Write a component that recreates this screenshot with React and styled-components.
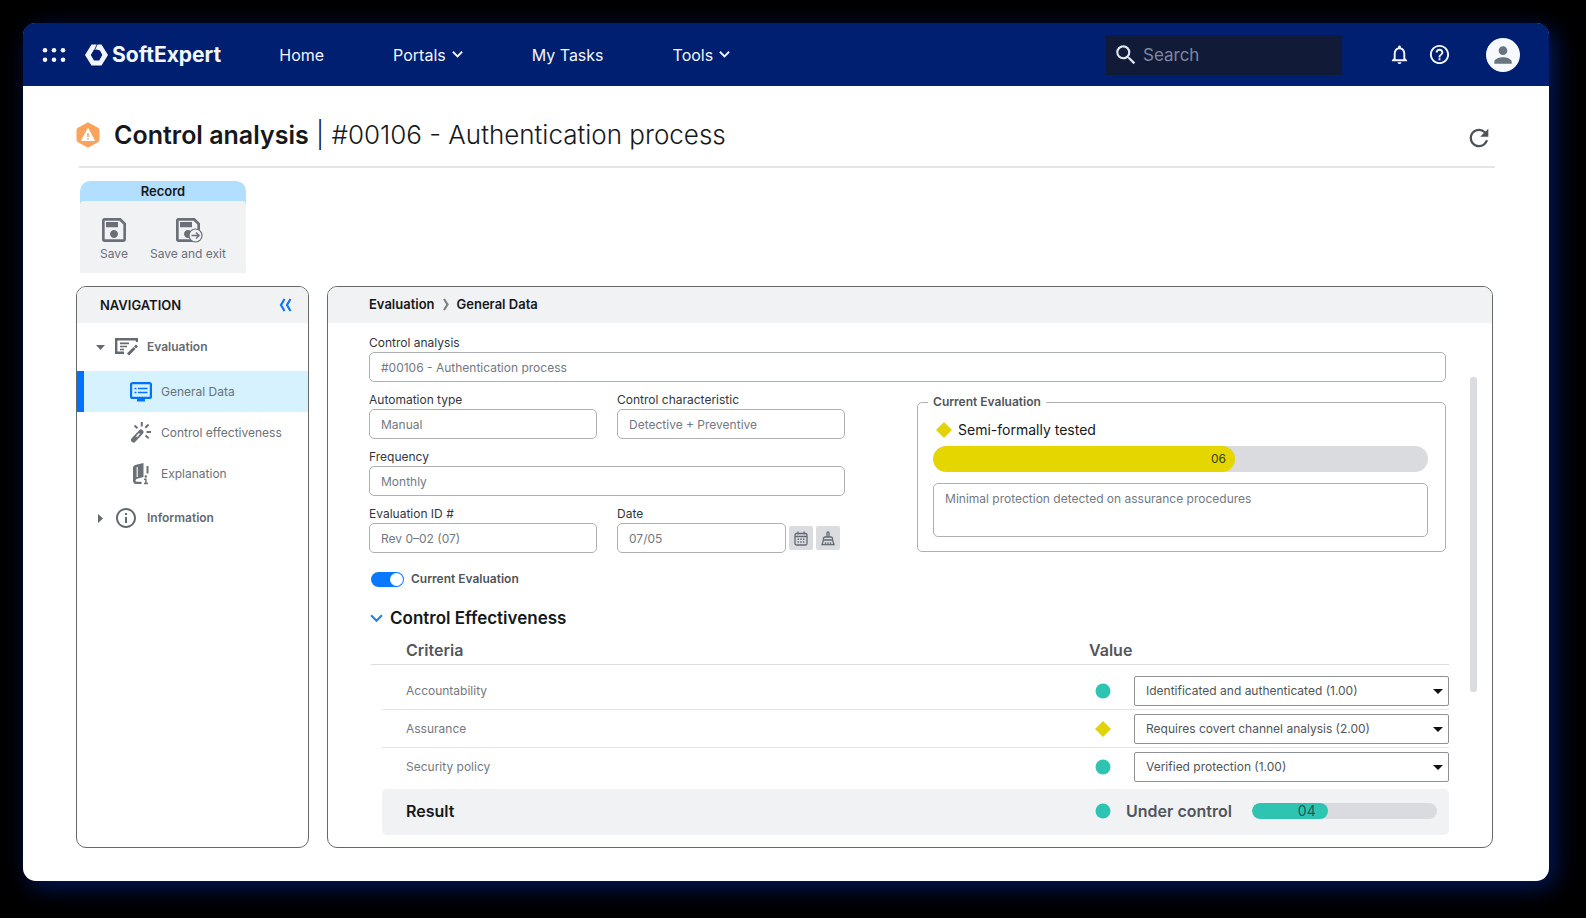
import React, {useState} from 'react';
import styled, {createGlobalStyle} from 'styled-components';
import {
    MdHelpOutline,
    MdInfoOutline,
    MdNotificationsNone,
    MdOutlineSave,
    MdPerson,
    MdRefresh,
    MdSearch
} from 'react-icons/md';

const GlobalStyle = createGlobalStyle`
    * {
        box-sizing: border-box;
    }

    body {
        margin: 0;
        background: #000000;
        color: #16181b;
        font-family: Inter, "Liberation Sans", sans-serif;
        font-size: 12px;
        line-height: 18px;
    }

    button, input, select, textarea {
        margin: 0;
        font: inherit;
        color: inherit;
    }

    button {
        padding: 0;
        border: 0;
        background: none;
        cursor: pointer;
    }

    svg {
        display: block;
        flex: none;
    }
`;

const Window = styled.div`
    margin: 23px 37px 37px 23px;
    background: #ffffff;
    border-radius: 13px;
    box-shadow: 6px 6px 24px #00185e;
`;

const TopBar = styled.header`
    display: flex;
    align-items: center;
    height: 63px;
    padding: 0 29px 0 19px;
    border-radius: 12px 12px 0 0;
    background: #001f70;
    color: #f2f7ff;
`;

const IconButton = styled.button`
    display: flex;
    align-items: center;
    justify-content: center;
    color: ${props => props.$color || 'inherit'};
`;

const Brand = styled.a`
    display: flex;
    align-items: center;
    gap: 4px;
    margin-left: 19px;
    color: inherit;
    font-size: 21px;
    font-weight: 700;
    line-height: 24px;
    text-decoration: none;
`;

const TopNav = styled.nav`
    display: flex;
    gap: 69px;
    margin-left: 58px;
`;

const TopLink = styled.a`
    display: flex;
    align-items: center;
    gap: 6px;
    color: inherit;
    font-size: 16px;
    line-height: 24px;
    text-decoration: none;
    white-space: nowrap;
`;

const SearchBox = styled.label`
    display: flex;
    align-items: center;
    gap: 2px;
    width: 236px;
    height: 40px;
    margin-left: auto;
    padding: 0 7px;
    background: #111a36;
    color: #dfe5f2;
`;

const SearchInput = styled.input`
    flex: 1;
    min-width: 0;
    border: 0;
    outline: 0;
    background: none;
    font-size: 17px;
    line-height: 24px;

    &::placeholder {
        color: #7e87a1;
        opacity: 1;
    }
`;

const TopActions = styled.div`
    display: flex;
    align-items: center;
    gap: 17px;
    margin: 0 35px 0 46px;
`;

const Avatar = styled.button`
    display: flex;
    align-items: center;
    justify-content: center;
    width: 34px;
    height: 34px;
    border-radius: 50%;
    background: #f6faff;
    color: #69747e;
`;

const Page = styled.main`
    padding: 32px 56px 33px 53px;
`;

const TitleRow = styled.div`
    display: flex;
    align-items: flex-end;
    justify-content: space-between;
    margin: 0 -2px 0 3px;
    padding: 0 2px 14px 0;
    border-bottom: 2px solid #e4e5e6;
`;

const TitleGroup = styled.div`
    display: flex;
    align-items: center;
    gap: 14px;
    margin-left: -3px;
`;

const Title = styled.h1`
    margin: 0;
    font-size: 26px;
    font-weight: 300;
    line-height: 34px;

    strong {
        font-size: 25px;
        font-weight: 600;
    }
`;

const Toolbar = styled.section`
    width: fit-content;
    margin: 13px 0 13px 4px;
    border-radius: 10px 10px 2px 2px;
    background: #b3dffe;
`;

const ToolbarTitle = styled.h2`
    margin: 0;
    font-size: 13px;
    font-weight: 600;
    line-height: 20px;
    text-align: center;
`;

const ToolbarBody = styled.div`
    display: flex;
    gap: 20px;
    padding: 13px 20px 11px 18px;
    border-radius: 4px 4px 2px 2px;
    background: #f1f2f4;
`;

const ToolButton = styled.button`
    display: flex;
    flex-direction: column;
    align-items: center;
    color: #6b7078;
    line-height: 16px;
`;

const Columns = styled.div`
    display: flex;
    gap: 18px;
`;

const Panel = styled.section`
    overflow: hidden;
    border: 1px solid #66696b;
    border-radius: 10px;
`;

const NavPanel = styled(Panel)`
    flex: none;
    width: 233px;
`;

const MainPanel = styled(Panel)`
    flex: 1;
    min-width: 0;
`;

const PanelHeader = styled.div`
    display: flex;
    align-items: center;
    justify-content: space-between;
    height: 36px;
    padding: 0 16px 0 23px;
    background: #f1f2f4;
`;

const PanelTitle = styled.h2`
    margin: 0;
    font-size: 13px;
    font-weight: 600;
`;

const Crumbs = styled.nav`
    display: flex;
    align-items: center;
    gap: 8px;
    height: 36px;
    padding: 0 41px 2px;
    background: #f1f2f4;
    font-size: 13px;
    font-weight: 600;

    a {
        color: inherit;
        text-decoration: none;
    }
`;

const NavGroup = styled.button`
    display: flex;
    align-items: center;
    width: 100%;
    height: 48px;
    padding-left: 17px;
    color: #646a71;
    font-size: 12px;
    font-weight: 600;
`;

const NavIcon = styled.span`
    display: flex;
    justify-content: center;
    width: 26px;
    margin: 0 8px 0 7px;
`;

const Caret = styled.span`
    display: flex;
    justify-content: center;
    width: 12px;
`;

const NavItem = styled.a`
    display: flex;
    align-items: center;
    gap: 7px;
    height: 41px;
    padding-left: 44px;
    border-left: 7px solid ${props => (props.$active ? '#0072ff' : 'transparent')};
    background: ${props => (props.$active ? '#d6f1ff' : 'transparent')};
    color: #6b7178;
    text-decoration: none;

    svg {
        color: ${props => (props.$active ? '#0072ff' : 'inherit')};
    }
`;

const NavItemIcon = styled.span`
    display: flex;
    justify-content: center;
    width: 26px;
`;

const MainBody = styled.div`
    display: flex;
    padding: 11px 15px 12px 41px;
`;

const Content = styled.div`
    flex: 1;
    min-width: 0;
`;

const ScrollThumb = styled.div`
    flex: none;
    width: 7px;
    height: 315px;
    margin: 43px 0 0 21px;
    border-radius: 3px;
    background: #dadce0;
`;

const Form = styled.form`
    margin-right: 3px;
`;

const FormColumns = styled.div`
    display: grid;
    grid-template-columns: 9fr 10fr;
    gap: 72px;
    margin-top: 9px;
`;

const Fields = styled.div`
    display: grid;
    grid-template-columns: 1fr 1fr;
    align-content: start;
    gap: 9px 20px;
`;

const Field = styled.div`
    display: flex;
    flex-direction: column;
    grid-column: ${props => (props.$wide ? 'span 2' : 'auto')};
    color: #33373b;
`;

const TextInput = styled.input`
    width: 100%;
    min-width: 0;
    height: 30px;
    padding: 0 11px;
    border: 1px solid #aeb1b4;
    border-radius: 5px;
    background: #ffffff;
    color: #74797f;
`;

const DateRow = styled.div`
    display: flex;
    align-items: center;
    gap: 3px;
    padding-right: 5px;
`;

const SquareButton = styled.button`
    display: flex;
    flex: none;
    align-items: center;
    justify-content: center;
    width: 24px;
    height: 24px;
    border-radius: 2px;
    background: #dadce0;
    color: #646a73;
`;

const SwitchLabel = styled.label`
    display: flex;
    align-items: center;
    gap: 7px;
    margin: 17px 0 0 2px;
    color: #50555a;
    font-weight: 600;
`;

const Switch = styled.input`
    display: flex;
    align-items: center;
    justify-content: ${props => (props.checked ? 'flex-end' : 'flex-start')};
    appearance: none;
    width: 33px;
    height: 15px;
    padding: 0 1px;
    border-radius: 8px;
    background: ${props => (props.checked ? '#0b79ff' : '#b9bdc1')};

    &::before {
        content: '';
        width: 13px;
        height: 13px;
        border-radius: 50%;
        background: #ffffff;
    }
`;

const Summary = styled.fieldset`
    align-self: start;
    min-width: 0;
    margin: 2px 0 0;
    padding: 9px 17px 14px 15px;
    border: 1px solid #aeb1b4;
    border-radius: 5px;
`;

const SummaryTitle = styled.legend`
    margin-left: -5px;
    padding: 0 5px;
    color: #50555a;
    font-weight: 600;
`;

const Status = styled.div`
    display: flex;
    align-items: center;
    gap: 6px;
    padding-left: 3px;
    font-size: 14px;
    line-height: 20px;
`;

const Bar = styled.div`
    overflow: hidden;
    flex: 1;
    height: ${props => (props.$large ? 26 : 16)}px;
    margin-top: ${props => (props.$large ? 6 : 0)}px;
    border-radius: 13px;
    background: #d9dbde;
`;

const BarFill = styled.div`
    height: 100%;
    padding-right: ${props => (props.$large ? 9 : 12)}px;
    border-radius: 13px;
    background: ${props => props.$color};
    color: #33420f;
    font-size: ${props => (props.$large ? 12 : 14)}px;
    line-height: ${props => (props.$large ? 26 : 16)}px;
    text-align: right;
`;

const Notes = styled.textarea`
    display: block;
    width: 100%;
    height: 54px;
    margin-top: 11px;
    padding: 6px 11px;
    border: 1px solid #aeb1b4;
    border-radius: 5px;
    color: #74797f;
    resize: none;
`;

const SectionToggle = styled.button`
    display: flex;
    align-items: center;
    gap: 7px;
    margin: 18px 0 8px 1px;
    color: #16181b;
    font-size: 17px;
    font-weight: 600;
    line-height: 24px;
`;

const Criteria = styled.table`
    display: block;
    margin-left: 2px;

    thead, tbody, tfoot {
        display: block;
    }

    tbody {
        padding: 7px 0 3px 11px;
    }

    tfoot {
        padding-left: 11px;
    }

    th, td {
        display: block;
        padding: 0;
    }
`;

const HeadRow = styled.tr`
    display: grid;
    grid-template-columns: 1fr 360px;
    padding: 0 0 2px 35px;
    border-bottom: 1px solid #dcdee0;
    color: #53575c;
    font-size: 16px;
    line-height: 24px;
    text-align: left;

    th {
        font-weight: 600;
    }
`;

const CriteriaRow = styled.tr`
    display: grid;
    grid-template-columns: 1fr 39px 315px;
    align-items: center;
    padding: 4px 0 3px 24px;
    border-bottom: 1px solid #e3e5e7;
    color: #74797f;

    &:last-child {
        border-bottom-color: transparent;
    }
`;

const ResultRow = styled.tr`
    display: grid;
    grid-template-columns: 1fr 31px 323px;
    align-items: center;
    height: 46px;
    padding: 0 0 2px 24px;
    border-radius: 5px;
    background: #f1f2f4;
    font-size: 16px;
    line-height: 24px;
    text-align: left;

    th {
        font-weight: 600;
    }
`;

const ResultValue = styled.div`
    display: flex;
    align-items: center;
    gap: 20px;
    padding-right: 12px;
    color: #50555a;
    font-weight: 600;

    ${BarFill} {
        color: #1c5a55;
        font-weight: 400;
    }
`;

const SelectBox = styled.div`
    display: flex;
    align-items: center;
    position: relative;

    svg {
        position: absolute;
        right: 6px;
        pointer-events: none;
    }
`;

const Select = styled.select`
    appearance: none;
    width: 100%;
    height: 30px;
    padding: 0 24px 0 11px;
    border: 1px solid #8d9194;
    border-radius: 2px;
    background: #ffffff;
    color: #50555a;
`;

const DotsIcon = () => (
    <svg width="24" height="14" viewBox="0 0 24 14" fill="currentColor">
        {[3, 12, 21].map(x => [2.3, 11.7].map(y => <circle key={x + '-' + y} cx={x} cy={y} r="2.300"/>))}
    </svg>
);

const LogoIcon = () => (
    <svg width="23" height="22" viewBox="0 0 23 22">
        <path
            d="M6.500 .5h10L23 11l-6.500 10.500h-10L0 11zM9 5.500L5.800 11l3.200 5.500h5.200l3.100-5.500-2.300-4.500-3.500-1z"
            fill="currentColor"
            fillRule="evenodd"
        />
        <path d="M12.300 0L9.800 5.500" stroke="#001f70" strokeWidth=".9"/>
    </svg>
);

const ChevronDown = ({size = 11, width = 2, color = 'currentColor'}) => (
    <svg width={size} height={size} viewBox="0 0 12 12" fill="none" stroke={color} strokeWidth={width}>
        <path d="M1 3l5 5 5-5"/>
    </svg>
);

const AlertIcon = () => (
    <svg width="24" height="26" viewBox="0 0 24 26">
        <path
            d="M12 1.500l9.500 5.200q1 .6 1 1.700v9.200q0 1.100-1 1.700L12 24.500l-9.500-5.200q-1-.6-1-1.700V8.400q0-1.100 1-1.700z"
            fill="#f9a35c"
            stroke="#f9a35c"
            strokeWidth="2"
            strokeLinejoin="round"
        />
        <path d="M12 6.500L18.500 18.500h-13z" fill="#ffffff" stroke="#ffffff" strokeLinejoin="round"/>
        <path d="M12 11v4M12 16.200v1.400" stroke="#f08a3c" strokeWidth="1.200"/>
    </svg>
);

const SaveExitIcon = () => (
    <svg width="32" height="32" viewBox="0 0 32 32">
        <MdOutlineSave size={32}/>
        <circle cx="23.500" cy="21.500" r="6.500" fill="#f1f2f4" stroke="currentColor" strokeWidth="1.200"/>
        <path d="M19.500 21.500h7.500M24 18.500l3 3-3 3" fill="none" stroke="currentColor" strokeWidth="1.500"/>
    </svg>
);

const CollapseIcon = () => (
    <svg width="13" height="14" viewBox="0 0 13 14" fill="none" stroke="#1477ee" strokeWidth="2.200">
        <path d="M5.500 1L2 7l3.500 6M11.500 1L8 7l3.500 6"/>
    </svg>
);

const CrumbIcon = () => (
    <svg width="6" height="13" viewBox="0 0 6 13" fill="none" stroke="#7b8285" strokeWidth="2.200">
        <path d="M1 1l3.500 5.500L1 12"/>
    </svg>
);

const EvaluationIcon = () => (
    <svg width="23" height="18" viewBox="0 0 23 18" fill="none" stroke="currentColor">
        <path d="M22 4V1.200H1.200v13.600H9" strokeWidth="2.400"/>
        <path d="M5 5.300h9M5 8.500h7M5 11.500h4" strokeWidth="1.700"/>
        <path d="M13 16.500L19.500 10M20 9.500l2-2" strokeWidth="3"/>
    </svg>
);

const ScreenIcon = () => (
    <svg width="22" height="20" viewBox="0 0 22 20" fill="none" stroke="currentColor">
        <rect x="1.100" y="1.100" width="19.800" height="14.800" rx="1.500" strokeWidth="2.200"/>
        <path d="M7 16.500h8v3H7z" fill="currentColor" stroke="none"/>
        <path d="M4.500 6.500h2M8 6.500h9.500M4.500 10.500h2M8 10.500h9.500" strokeWidth="1.600"/>
    </svg>
);

const WandIcon = () => (
    <svg width="22" height="21" viewBox="0 0 22 21" fill="none" stroke="currentColor" strokeWidth="2">
        <path d="M3.500 18L11 10" strokeWidth="5" strokeLinecap="round"/>
        <path d="M6.500 14.800L9.500 11.600" stroke="#ffffff" strokeWidth="1.400"/>
        <path d="M4.500 3.500l3 2.800M11.800 0v4.500M18.500 2.500l-3.200 3.200M16.500 10H21M15.500 13.500l3.200 2.700"/>
    </svg>
);

const BookIcon = () => (
    <svg width="18" height="22" viewBox="0 0 18 22" fill="none">
        <path
            d="M4 1.800L11.500 0v14l-6.500 1.800q-1.500.5-1.500 1.700t1.500 1.200h4.500V21H4q-3-.3-3-3.500V5q0-2.500 3-3.200z"
            fill="currentColor"
        />
        <path d="M5.200 4v10" stroke="#ffffff" strokeWidth="1.100"/>
        <path d="M15.500 3v7.500" stroke="currentColor" strokeWidth="2"/>
        <circle cx="13.800" cy="13.500" r="1.200" fill="currentColor"/>
        <path d="M12 16.200h1.900v4.300M12 20.500h4" stroke="currentColor" strokeWidth="1.500"/>
    </svg>
);

const CalendarIcon = () => (
    <svg width="14" height="15" viewBox="0 0 14 15" fill="none" stroke="currentColor" strokeWidth="1.300">
        <rect x="1" y="2.500" width="12" height="11.500" rx="1.500"/>
        <path d="M1 5.500h12M4 .5v3M10 .5v3"/>
        <path d="M3.500 8.200h7M3.500 11h7" strokeWidth="1.500" strokeDasharray="1.500 1.200"/>
    </svg>
);

const BrushIcon = () => (
    <svg width="14" height="15" viewBox="0 0 14 15" fill="none" stroke="currentColor" strokeWidth="1.300">
        <path d="M6 6V1.800q0-1 1-1t1 1V6"/>
        <path d="M2.500 9V7.500Q2.500 6 4 6h6q1.500 0 1.500 1.500V9zM2.500 9L1 13.700h12L11.500 9M4.500 13.500v-2.300M7 13.500v-2.300M9.500 13.500v-2.300"/>
    </svg>
);

const SelectArrow = () => (
    <svg width="10" height="5" viewBox="0 0 10 5">
        <path d="M0 0h10L5 5z" fill="#111111"/>
    </svg>
);

const Marker = ({shape}) => (
    <svg width="16" height="16" viewBox="0 0 16 16">
        {shape === 'diamond'
            ? <path d="M8 0l8 8-8 8-8-8z" fill="#e2d308"/>
            : <circle cx="8" cy="8" r="7.500" fill="#2fc4b2"/>}
    </svg>
);

const criteria = [
    {id: 'accountability', name: 'Accountability', shape: 'circle', value: 'Identificated and authenticated (1.00)'},
    {id: 'assurance', name: 'Assurance', shape: 'diamond', value: 'Requires covert channel analysis (2.00)'},
    {id: 'policy', name: 'Security policy', shape: 'circle', value: 'Verified protection (1.00)'},
];

const LabeledInput = ({id, label, value, wide}) => (
    <Field $wide={wide}>
        <label htmlFor={id}>{label}</label>
        <TextInput id={id} defaultValue={value}/>
    </Field>
);

const Progress = ({label, value, percent, color, large}) => (
    <Bar $large={large} role="progressbar" aria-label={label} aria-valuenow={percent}>
        <BarFill $large={large} $color={color} style={{width: percent + '%'}}>{value}</BarFill>
    </Bar>
);

const Header = () => (
    <TopBar>
        <IconButton aria-label="Apps"><DotsIcon/></IconButton>
        <Brand href="#"><LogoIcon/>SoftExpert</Brand>
        <TopNav>
            <TopLink href="#">Home</TopLink>
            <TopLink href="#">Portals<ChevronDown/></TopLink>
            <TopLink href="#">My Tasks</TopLink>
            <TopLink href="#">Tools<ChevronDown/></TopLink>
        </TopNav>
        <SearchBox>
            <MdSearch size={26}/>
            <SearchInput aria-label="Search" placeholder="Search"/>
        </SearchBox>
        <TopActions>
            <IconButton aria-label="Notifications"><MdNotificationsNone size={23}/></IconButton>
            <IconButton aria-label="Help"><MdHelpOutline size={23}/></IconButton>
        </TopActions>
        <Avatar aria-label="Account"><MdPerson size={26}/></Avatar>
    </TopBar>
);

const Navigation = () => (
    <NavPanel>
        <PanelHeader>
            <PanelTitle>NAVIGATION</PanelTitle>
            <IconButton aria-label="Collapse"><CollapseIcon/></IconButton>
        </PanelHeader>
        <NavGroup>
            <Caret>
                <svg width="9" height="5" viewBox="0 0 9 5" fill="currentColor"><path d="M0 0h9L4.500 5z"/></svg>
            </Caret>
            <NavIcon><EvaluationIcon/></NavIcon>
            Evaluation
        </NavGroup>
        <NavItem href="#" $active><NavItemIcon><ScreenIcon/></NavItemIcon>General Data</NavItem>
        <NavItem href="#"><NavItemIcon><WandIcon/></NavItemIcon>Control effectiveness</NavItem>
        <NavItem href="#"><NavItemIcon><BookIcon/></NavItemIcon>Explanation</NavItem>
        <NavGroup>
            <Caret>
                <svg width="5" height="9" viewBox="0 0 5 9" fill="currentColor"><path d="M0 0v9l5-4.500z"/></svg>
            </Caret>
            <NavIcon><MdInfoOutline size={24}/></NavIcon>
            Information
        </NavGroup>
    </NavPanel>
);

const CriteriaTable = () => (
    <Criteria>
        <thead>
            <HeadRow>
                <th scope="col">Criteria</th>
                <th scope="col">Value</th>
            </HeadRow>
        </thead>
        <tbody>
            {criteria.map(c => (
                <CriteriaRow key={c.id}>
                    <td><label htmlFor={c.id}>{c.name}</label></td>
                    <td><Marker shape={c.shape}/></td>
                    <td>
                        <SelectBox>
                            <Select id={c.id} defaultValue={c.value}>
                                <option>{c.value}</option>
                            </Select>
                            <SelectArrow/>
                        </SelectBox>
                    </td>
                </CriteriaRow>
            ))}
        </tbody>
        <tfoot>
            <ResultRow>
                <th scope="row">Result</th>
                <td><Marker shape="circle"/></td>
                <td>
                    <ResultValue>
                        Under control
                        <Progress label="Result" value="04" percent={41} color="#2fc4b2"/>
                    </ResultValue>
                </td>
            </ResultRow>
        </tfoot>
    </Criteria>
);

const App = () => {
    const [current, setCurrent] = useState(true);

    return (
        <>
            <GlobalStyle/>
            <Window>
                <Header/>
                <Page>
                    <TitleRow>
                        <TitleGroup>
                            <AlertIcon/>
                            <Title><strong>Control analysis</strong> | #00106 - Authentication process</Title>
                        </TitleGroup>
                        <IconButton aria-label="Refresh" $color="#4d5256"><MdRefresh size={28}/></IconButton>
                    </TitleRow>
                    <Toolbar>
                        <ToolbarTitle>Record</ToolbarTitle>
                        <ToolbarBody>
                            <ToolButton><MdOutlineSave size={32}/>Save</ToolButton>
                            <ToolButton><SaveExitIcon/>Save and exit</ToolButton>
                        </ToolbarBody>
                    </Toolbar>
                    <Columns>
                        <Navigation/>
                        <MainPanel>
                            <Crumbs>
                                <a href="#">Evaluation</a>
                                <CrumbIcon/>
                                <a href="#">General Data</a>
                            </Crumbs>
                            <MainBody>
                                <Content>
                                    <Form>
                                        <LabeledInput
                                            id="analysis"
                                            label="Control analysis"
                                            value="#00106 - Authentication process"
                                        />
                                        <FormColumns>
                                            <Fields>
                                                <LabeledInput id="type" label="Automation type" value="Manual"/>
                                                <LabeledInput
                                                    id="characteristic"
                                                    label="Control characteristic"
                                                    value="Detective + Preventive"
                                                />
                                                <LabeledInput id="frequency" label="Frequency" value="Monthly" wide/>
                                                <LabeledInput
                                                    id="evaluation"
                                                    label="Evaluation ID #"
                                                    value="Rev 0–02 (07)"
                                                />
                                                <Field>
                                                    <label htmlFor="date">Date</label>
                                                    <DateRow>
                                                        <TextInput id="date" defaultValue="07/05"/>
                                                        <SquareButton type="button" aria-label="Pick date">
                                                            <CalendarIcon/>
                                                        </SquareButton>
                                                        <SquareButton type="button" aria-label="Clear date">
                                                            <BrushIcon/>
                                                        </SquareButton>
                                                    </DateRow>
                                                </Field>
                                            </Fields>
                                            <Summary>
                                                <SummaryTitle>Current Evaluation</SummaryTitle>
                                                <Status><Marker shape="diamond"/>Semi-formally tested</Status>
                                                <Progress
                                                    label="Current evaluation"
                                                    value="06"
                                                    percent={61}
                                                    color="#e6d600"
                                                    large
                                                />
                                                <Notes
                                                    aria-label="Notes"
                                                    defaultValue="Minimal protection detected on assurance procedures"
                                                />
                                            </Summary>
                                        </FormColumns>
                                        <SwitchLabel>
                                            <Switch
                                                type="checkbox"
                                                role="switch"
                                                checked={current}
                                                onChange={e => setCurrent(e.target.checked)}
                                            />
                                            Current Evaluation
                                        </SwitchLabel>
                                    </Form>
                                    <SectionToggle aria-expanded="true">
                                        <ChevronDown size={13} color="#2583d8"/>
                                        Control Effectiveness
                                    </SectionToggle>
                                    <CriteriaTable/>
                                </Content>
                                <ScrollThumb/>
                            </MainBody>
                        </MainPanel>
                    </Columns>
                </Page>
            </Window>
        </>
    );
};

export default App;
